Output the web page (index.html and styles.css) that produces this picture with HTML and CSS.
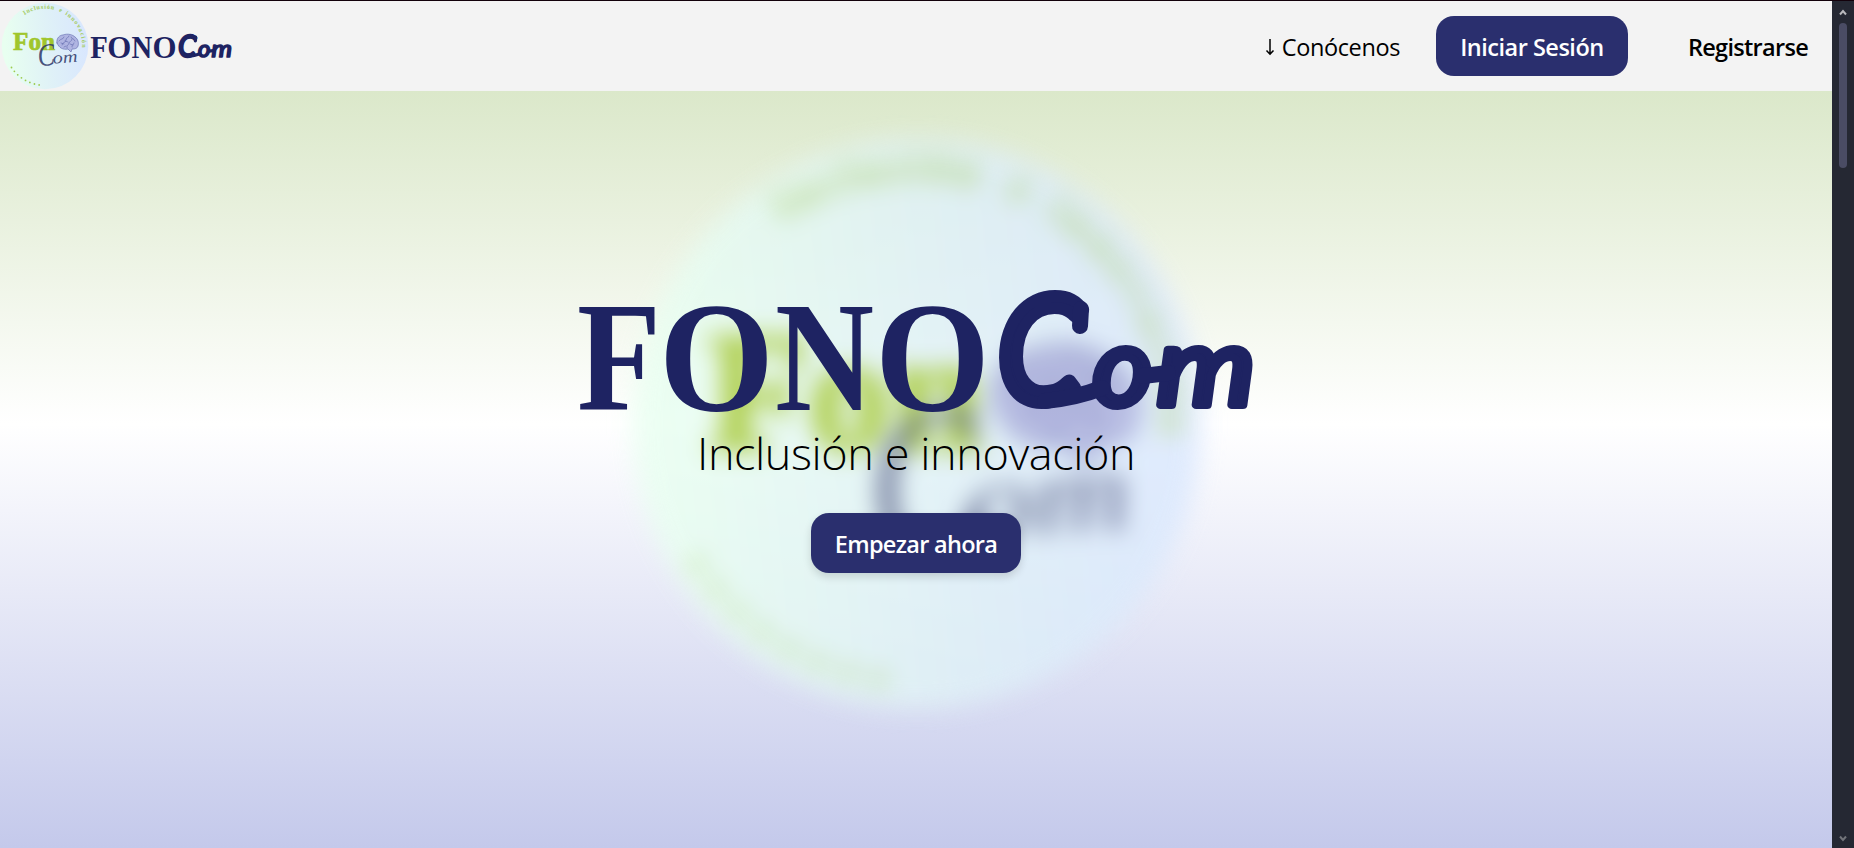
FILE: index.html
```html
<!DOCTYPE html>
<html lang="es">
<head>
<meta charset="utf-8">
<title>FONOCom</title>
<link rel="stylesheet" href="styles.css">
</head>
<body>
<svg class="defs" width="0" height="0" aria-hidden="true">
  <defs>
    <linearGradient id="disc" x1="0" x2="1" y1="0.1" y2="0">
      <stop offset="0" stop-color="#e8fff0"/>
      <stop offset="0.5" stop-color="#dff1f7"/>
      <stop offset="1" stop-color="#d8e5ff"/>
    </linearGradient>
    <path id="ring" d="M24.6 14A37 37 0 0 1 82 49"/>
    <symbol id="seal" viewBox="0 0 90 90">
      <circle cx="45" cy="45" r="43.3" fill="url(#disc)"/>
      <g class="seal-ring">
        <text><textPath href="#ring" startOffset="0" textLength="30.5" lengthAdjust="spacing">Inclusión</textPath></text>
        <text><textPath href="#ring" startOffset="35.5">e</textPath></text>
        <text><textPath href="#ring" startOffset="42.5" textLength="39" lengthAdjust="spacing">innovación</textPath></text>
      </g>
      <path d="M11.5 66.5A40 40 0 0 0 39.5 84" fill="none" stroke="#9ccb4e" stroke-width="1.8" stroke-linecap="round" stroke-dasharray="0 4.8"/>
      <text class="seal-fon" x="13" y="48.8" textLength="42" lengthAdjust="spacingAndGlyphs">Fon</text>
      <g fill="#b0b5e2" stroke="#6a72b3" stroke-width="0.7" stroke-linecap="round">
        <path d="M57 42c-1-5 3-8 6-8 5-2 10 0 12 2 3 2 4 6 3 9-1 3-4 3-6 3l-1 3-3-3c-5 1-9-1-11-6z"/>
        <path fill="none" d="M59 40c2-3 4-1 5-4M62 44c0-3 4-2 4-5s3-2 3-4M61 42l3 1M67 47c-1-3 2-3 2-5s3-1 3-4M71 36c0 2 3 1 4 4M72 46c-1-2 2-2 2-4M65 40l3 1M70 43l3 1M64 46l2-1"/>
      </g>
      <g class="seal-com" transform="rotate(-5 40 64)">
        <text x="38.5" y="65" font-size="32" textLength="17" lengthAdjust="spacingAndGlyphs">C</text>
        <text x="53" y="64" font-size="17" textLength="25" lengthAdjust="spacingAndGlyphs">om</text>
      </g>
    </symbol>
    <symbol id="wordmark" viewBox="576 280 684 140">
      <g class="mark-serif">
        <text x="577" y="410" textLength="84" lengthAdjust="spacingAndGlyphs">F</text>
        <text x="659" y="410" textLength="115" lengthAdjust="spacingAndGlyphs">O</text>
        <text x="775" y="410" textLength="99" lengthAdjust="spacingAndGlyphs">N</text>
        <text x="875" y="410" textLength="115" lengthAdjust="spacingAndGlyphs">O</text>
      </g>
      <g class="mark-script">
        <text x="998" y="402" font-size="145" textLength="84" lengthAdjust="spacingAndGlyphs">C</text>
        <text class="mark-small" x="1093" y="405" font-size="108" textLength="59" lengthAdjust="spacingAndGlyphs">o</text>
        <text class="mark-small" x="1157" y="405" font-size="109" textLength="98" lengthAdjust="spacingAndGlyphs">m</text>
        <path d="M1081 309L1080 326M1045 401Q1076 398 1102 388M1143 376L1168 373"/>
      </g>
    </symbol>
  </defs>
</svg>
<div class="window">
  <div class="page">
    <header class="topbar">
      <a class="brand">
        <svg class="brand-seal"><use href="#seal"/></svg>
        <svg class="brand-word"><use href="#wordmark"/></svg>
      </a>
      <nav class="nav">
        <a class="nav-link"><svg class="arrow" viewBox="0 0 10 18"><path d="M5 1V16M1.5 12.5L5 16.2L8.5 12.5"/></svg><span>Conócenos</span></a>
        <a class="button login">Iniciar Sesión</a>
        <a class="register">Registrarse</a>
      </nav>
    </header>
    <main class="hero">
      <svg class="hero-seal"><use href="#seal"/></svg>
      <svg class="hero-word"><use href="#wordmark"/></svg>
      <p class="tagline">Inclusión e innovación</p>
      <a class="button start">Empezar ahora</a>
    </main>
  </div>
  <div class="scrollbar">
    <svg class="chevron" viewBox="0 0 8 7"><path d="M1 5.5L4 2L7 5.5"/></svg>
    <div class="thumb"></div>
    <svg class="chevron down" viewBox="0 0 8 7"><path d="M1 1.5L4 5L7 1.5"/></svg>
  </div>
</div>
</body>
</html>
```

FILE: styles.css
```css
* { box-sizing: border-box; }
body { margin: 0; font-family: "Open Sans", "Noto Sans", sans-serif; color: #000; overflow: hidden; }
.defs { position: absolute; }
.window { display: flex; width: 1854px; height: 848px; border-top: 1px solid #12000a; }
.page { flex: 1; display: flex; flex-direction: column; }

.topbar { height: 90px; background: #f3f3f3; display: flex; justify-content: space-between; align-items: center; padding-right: 24px; }
.brand { display: flex; align-items: center; }
.brand-seal { width: 90px; height: 90px; }
.brand-word { width: 143px; height: 29.5px; }
.nav { display: flex; align-items: center; font-size: 23.5px; line-height: 62px; white-space: nowrap; }
.nav-link { display: flex; align-items: center; gap: 7px; margin-right: 36px; padding-top: 1px; letter-spacing: -0.4px; }
.arrow { width: 10px; height: 18px; fill: none; stroke: #000; stroke-width: 1.5; }
.button { display: block; height: 60px; line-height: 62px; border-radius: 18px; background: #2a2f6e; color: #fff; font-size: 23.5px; font-weight: 600; text-align: center; white-space: nowrap; }
.login { width: 192px; letter-spacing: -0.5px; margin-right: 60px; }
.register { font-weight: 600; letter-spacing: -0.7px; padding-top: 1px; }

.hero { position: relative; flex: 1; display: flex; flex-direction: column; align-items: center; padding-top: 189px; background: linear-gradient(#dbe8ca 0%, #fff 44%, #c4c9eb 100%); overflow: hidden; }
.hero-seal { position: absolute; left: 622px; top: 38px; width: 590px; height: 590px; filter: blur(12px); opacity: 0.82; }
.hero-word { position: relative; width: 684px; height: 140px; flex: none; margin-left: 4px; }
.tagline { position: relative; margin: 3px 0 0; font-size: 45px; line-height: 60px; font-weight: 300; letter-spacing: -0.4px; white-space: nowrap; }
.start { position: relative; width: 210px; margin-top: 30px; letter-spacing: -0.7px; box-shadow: 0 4px 8px rgba(0, 0, 0, 0.14); }

.seal-ring { font: bold 6px "Liberation Serif", serif; fill: #a6cd68; stroke: #a6cd68; stroke-width: 0.1px; }
.seal-fon { font: bold 26px "Liberation Serif", serif; fill: #a0c62c; stroke: #a0c62c; stroke-width: 0.7px; }
.seal-com { font-family: "Liberation Serif", serif; font-style: italic; fill: #2d3566; fill-opacity: 0.85; }
.mark-serif { font: bold 156px "Liberation Serif", serif; fill: #1e2362; }
.mark-script { font-family: Lato, sans-serif; font-weight: 400; font-style: italic; fill: #1e2362; stroke: #1e2362; stroke-width: 12px; stroke-linejoin: round; stroke-linecap: round; }
.mark-script .mark-small { stroke-width: 8px; }
.mark-script path { fill: none; stroke-width: 16px; }

.scrollbar { width: 22px; background: #252833; display: flex; flex-direction: column; align-items: center; padding: 8px 0 6px; }
.chevron { width: 8px; height: 7px; fill: none; stroke: #b9b9bd; stroke-width: 2; }
.down { margin-top: auto; stroke: #72747a; }
.thumb { width: 8px; height: 145px; margin-top: 7px; border-radius: 4px; background: #4a4c64; }
```
